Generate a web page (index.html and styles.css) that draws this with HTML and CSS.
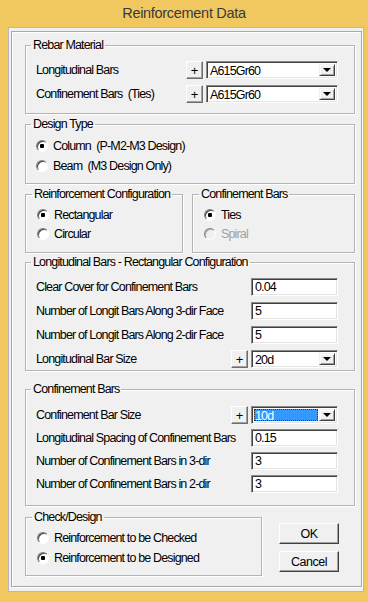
FILE: index.html
```html
<!DOCTYPE html>
<html lang="en">
  <head>
    <meta charset="UTF-8" />
    <meta name="viewport" content="width=device-width, initial-scale=1.0" />
    <title>Reinforcement Data</title>
    <link rel="stylesheet" href="styles.css">
  </head>
  <body>
    <div class="titlebar">Reinforcement Data</div>

    <div class="window">
      <div class="frame">
        <fieldset class="group rebar">
          <legend>Rebar Material</legend>
          <div class="row">
            <span class="label">Longitudinal Bars</span>
            <span class="plus">+</span>
            <div class="combo wide"><span class="value">A615Gr60</span><span class="drop"></span></div>
          </div>
          <div class="row">
            <span class="label">Confinement Bars  (Ties)</span>
            <span class="plus">+</span>
            <div class="combo wide"><span class="value">A615Gr60</span><span class="drop"></span></div>
          </div>
        </fieldset>

        <fieldset class="group design-type">
          <legend>Design Type</legend>
          <div class="radio checked"><span class="dot"></span>Column  (P-M2-M3 Design)</div>
          <div class="radio"><span class="dot"></span>Beam  (M3 Design Only)</div>
        </fieldset>

        <div class="pair">
          <fieldset class="group config">
            <legend>Reinforcement Configuration</legend>
            <div class="radio checked"><span class="dot"></span>Rectangular</div>
            <div class="radio"><span class="dot"></span>Circular</div>
          </fieldset>
          <fieldset class="group config">
            <legend>Confinement Bars</legend>
            <div class="radio checked"><span class="dot"></span>Ties</div>
            <div class="radio disabled"><span class="dot"></span>Spiral</div>
          </fieldset>
        </div>

        <fieldset class="group longit">
          <legend>Longitudinal Bars - Rectangular Configuration</legend>
          <div class="row">
            <span class="label">Clear Cover for Confinement Bars</span>
            <span class="field">0.04</span>
          </div>
          <div class="row">
            <span class="label">Number of Longit Bars Along 3-dir Face</span>
            <span class="field">5</span>
          </div>
          <div class="row">
            <span class="label">Number of Longit Bars Along 2-dir Face</span>
            <span class="field">5</span>
          </div>
          <div class="row">
            <span class="label">Longitudinal Bar Size</span>
            <span class="plus">+</span>
            <div class="combo"><span class="value">20d</span><span class="drop"></span></div>
          </div>
        </fieldset>

        <fieldset class="group confine">
          <legend>Confinement Bars</legend>
          <div class="row">
            <span class="label">Confinement Bar Size</span>
            <span class="plus">+</span>
            <div class="combo"><span class="value selected">10d</span><span class="drop"></span></div>
          </div>
          <div class="row">
            <span class="label">Longitudinal Spacing of Confinement Bars</span>
            <span class="field">0.15</span>
          </div>
          <div class="row">
            <span class="label">Number of Confinement Bars in 3-dir</span>
            <span class="field">3</span>
          </div>
          <div class="row">
            <span class="label">Number of Confinement Bars in 2-dir</span>
            <span class="field">3</span>
          </div>
        </fieldset>

        <div class="bottom">
          <fieldset class="group check">
            <legend>Check/Design</legend>
            <div class="radio"><span class="dot"></span>Reinforcement to be Checked</div>
            <div class="radio checked"><span class="dot"></span>Reinforcement to be Designed</div>
          </fieldset>
          <div class="buttons">
            <button class="btn">OK</button>
            <button class="btn">Cancel</button>
          </div>
        </div>
      </div>
    </div>
  </body>
</html>
```

FILE: styles.css
```css
html,
body {
  margin: 0;
  height: 100%;
}

body {
  background: #f1c75f;
  font-family: 'Liberation Sans', Arial, sans-serif;
  font-size: 12.5px;
  letter-spacing: -0.85px;
  color: #000;
  overflow: hidden;
}

.titlebar {
  height: 27px;
  line-height: 26px;
  text-align: center;
  font-size: 14.5px;
  letter-spacing: -0.3px;
  color: #3a3a3a;
}

.window {
  box-sizing: border-box;
  width: 356px;
  height: 565px;
  margin-left: 8px;
  padding: 3px 1px 4px 2px;
  background: #f0f0f0;
  border: 1px solid #b8b8b8;
}

.frame {
  box-sizing: border-box;
  height: 100%;
  padding: 6px 6px 0 13px;
  border: 1px solid #a8a8a8;
  box-shadow: inset 1px 1px 0 #fff, 1px 1px 0 #fff;
}

.group {
  margin: 0;
  padding: 0 16px 0 10px;
  border: 1px solid #b4b4b4;
  box-shadow: inset 1px 1px 0 #fff, 1px 1px 0 #fff;
  min-width: 0;
}

.group legend {
  margin-left: -5px;
  padding: 0 2px;
  line-height: 14px;
  white-space: nowrap;
}

.rebar {
  padding-top: 9px;
  padding-bottom: 10px;
}

.design-type {
  margin-top: 3px;
  padding-top: 7px;
  padding-bottom: 9px;
}

.pair {
  display: flex;
  gap: 9px;
  margin-top: 3px;
}

.config {
  width: 158px;
  box-sizing: border-box;
  padding: 6px 8px 10px 11px;
}

.config + .config {
  flex: 1;
}

.config .radio + .radio {
  margin-top: 3px;
}

.longit {
  margin-top: 2px;
  padding-top: 9px;
  padding-bottom: 2px;
}

.confine {
  margin-top: 11px;
  padding-top: 10px;
  padding-bottom: 12px;
}

.confine .row + .row {
  margin-top: 5px;
}

.row {
  display: flex;
  align-items: center;
  height: 18px;
}

.row + .row {
  margin-top: 6px;
}

.label {
  flex: 1;
  min-width: 0;
  white-space: pre;
}

.plus {
  box-sizing: border-box;
  flex-shrink: 0;
  width: 17px;
  height: 18px;
  margin-right: 3px;
  display: flex;
  justify-content: center;
  align-items: center;
  font-size: 13px;
  letter-spacing: 0;
  background: #f0f0f0;
  border: 1px solid;
  border-color: #fff #6d6d6d #6d6d6d #fff;
  box-shadow: inset -1px -1px 0 #a0a0a0;
}

.field,
.combo {
  box-sizing: border-box;
  flex-shrink: 0;
  width: 87px;
  height: 18px;
  background: #fff;
  border: 1px solid;
  border-color: #8a8a8a #fff #fff #8a8a8a;
  box-shadow: inset 1px 1px 0 #404040, inset -1px -1px 0 #e3e3e3;
}

.field {
  padding: 1px 0 0 3px;
  line-height: 15px;
}

.combo {
  display: flex;
  padding: 2px;
}

.combo.wide {
  width: 132px;
}

.value {
  flex: 1;
  padding-left: 1px;
  line-height: 14px;
}

.value.selected {
  margin-right: 1px;
  background: #3399ff;
  color: #fff;
  outline: 1px dotted #333;
  outline-offset: -1px;
}

.drop {
  box-sizing: border-box;
  width: 16px;
  display: flex;
  justify-content: center;
  align-items: center;
  background: #f0f0f0;
  border: 1px solid;
  border-color: #f0f0f0 #404040 #404040 #f0f0f0;
  box-shadow: inset 1px 1px 0 #fff, inset -1px -1px 0 #a0a0a0;
}

.drop::after {
  content: '';
  border-left: 4px solid transparent;
  border-right: 4px solid transparent;
  border-top: 4px solid #000;
}

.radio {
  display: flex;
  align-items: center;
  height: 16px;
  white-space: pre;
}

.radio + .radio {
  margin-top: 4px;
}

.dot {
  box-sizing: border-box;
  flex-shrink: 0;
  width: 12px;
  height: 12px;
  margin-right: 5px;
  border-radius: 50%;
  border: 1px solid;
  border-color: #808080 #fff #fff #808080;
  background: #fff;
  box-shadow: inset 1px 1px 0 #404040;
}

.checked .dot {
  background: radial-gradient(circle, #000 2px, #fff 2.5px);
}

.disabled {
  color: #a0a0a0;
}

.disabled .dot {
  background: #f0f0f0;
  box-shadow: inset 1px 1px 0 #b0b0b0;
}

.bottom {
  display: flex;
  align-items: flex-start;
  margin-top: 4px;
}

.check {
  width: 237px;
  box-sizing: border-box;
  padding: 6px 10px 9px 11px;
}

.buttons {
  display: flex;
  flex-direction: column;
  gap: 7px;
  margin: 13px 0 0 17px;
}

.btn {
  box-sizing: border-box;
  width: 60px;
  height: 21px;
  padding: 0;
  font-family: inherit;
  font-size: 12.5px;
  letter-spacing: -0.5px;
  color: #000;
  background: #f0f0f0;
  border: 1px solid;
  border-color: #fff #404040 #404040 #fff;
  box-shadow: inset -1px -1px 0 #a0a0a0;
}
```
